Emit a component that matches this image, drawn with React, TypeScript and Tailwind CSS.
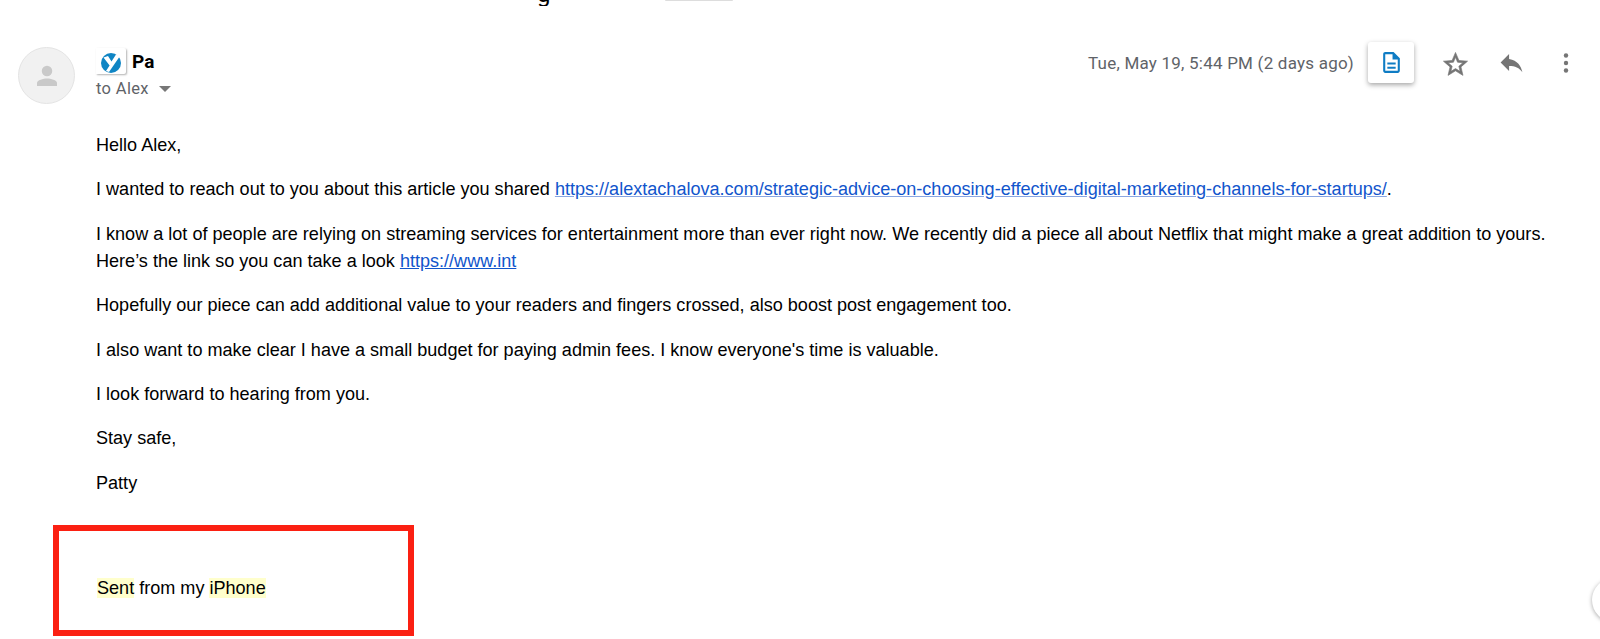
const ICON_GRAY = "#757575";

function Logo() {
  return (
    <div className="flex h-[26px] w-[30px] items-center justify-center rounded-r-[2px] bg-white pt-[3px] shadow-[1px_1px_2px_rgba(0,0,0,0.3)]">
      <svg viewBox="0 0 20 20" className="h-[20px] w-[20px]">
        <circle cx="10" cy="10" r="10" fill="#0f85c4" />
        <path d="M2.5 4.5 7 3 10.5 8.5 15 1.5 19 3 8 19 5 18 8.6 12.6Z" fill="#fff" />
      </svg>
    </div>
  );
}

function Header() {
  return (
    <div className="flex items-start pl-[18px] pr-[22px]">
      <div className="flex h-[57px] w-[57px] shrink-0 items-center justify-center rounded-full border border-[#e4e4e4] bg-[#f1f1f1]">
        <svg viewBox="0 0 24 24" className="h-[30px] w-[30px]" fill="#c9c9c9">
          <circle cx="12" cy="8" r="4.2" />
          <path d="M12 14c-3 0-8 1.3-8 3.6V20h16v-2.4C20 15.3 15 14 12 14z" />
        </svg>
      </div>
      <div className="ml-[21px] flex flex-col">
        <div className="mt-[1px] flex h-[26px] items-center">
          <Logo />
          <span className="ml-[6px] mt-[3px] text-[19px] font-bold text-black font-['Roboto',sans-serif]">Pa</span>
        </div>
        <div className="mt-[5px] flex items-center text-[16.5px] leading-[20px] tracking-[0.35px] text-[#5f6368] font-['Roboto',sans-serif]">
          to Alex
          <span className="ml-[10px] h-0 w-0 border-x-[6px] border-t-[6px] border-x-transparent border-t-[#777777]" />
        </div>
      </div>
      <div className="ml-auto -mt-[5px] flex h-[41px] items-center">
        <span className="mt-[3px] text-[17px] tracking-[0.22px] text-[#5f6368] font-['Roboto',sans-serif]">
          Tue, May 19, 5:44 PM (2 days ago)
        </span>
        <div className="ml-[14px] flex h-[41px] w-[46px] items-center justify-center rounded-[3px] bg-white shadow-[0_2px_5px_rgba(0,0,0,0.35)]">
          <svg viewBox="0 0 24 24" className="h-[25px] w-[25px]" fill="#0f7cc4">
            <path d="M8 16h8v2H8zm0-4h8v2H8zm6-10H6c-1.1 0-2 .9-2 2v16c0 1.1.89 2 1.99 2H18c1.1 0 2-.9 2-2V8l-6-6zm4 18H6V4h7v5h5v11z" />
          </svg>
        </div>
        <svg viewBox="0 0 24 24" className="ml-[27px] mt-[3px] h-[29px] w-[29px]" fill={ICON_GRAY} stroke={ICON_GRAY} strokeWidth="0.5">
          <path d="M22 9.24l-7.19-.62L12 2 9.19 8.63 2 9.24l5.46 4.73L5.82 21 12 17.27 18.18 21l-1.63-7.03L22 9.24zM12 15.4l-3.76 2.27 1-4.28-3.32-2.88 4.38-.38L12 6.1l1.71 4.04 4.38.38-3.32 2.88 1 4.28L12 15.4z" />
        </svg>
        <svg viewBox="0 0 24 24" className="ml-[27px] h-[29px] w-[29px]" fill={ICON_GRAY}>
          <path d="M10 9V5l-7 7 7 7v-4.1c5 0 8.5 1.6 11 5.1-1-5-4-10-11-11z" />
        </svg>
        <svg viewBox="0 0 24 24" className="ml-[28px] h-[24px] w-[24px]" fill={ICON_GRAY}>
          <circle cx="12" cy="4.5" r="2.2" />
          <circle cx="12" cy="12" r="2.2" />
          <circle cx="12" cy="19.5" r="2.2" />
        </svg>
      </div>
    </div>
  );
}

function Body() {
  return (
    <div className="ml-[96px] mt-[28px] flex flex-col gap-[17.4px] text-[18.07px] leading-[27px] text-black font-['Liberation_Sans',sans-serif]">
      <p>Hello Alex,</p>
      <p>
        I wanted to reach out to you about this article you shared{" "}
        <a className="text-[#1155cc] underline decoration-[#8aa6e2]">
          https://alextachalova.com/strategic-advice-on-choosing-effective-digital-marketing-channels-for-startups/
        </a>
        .
      </p>
      <p>
        I know a lot of people are relying on streaming services for entertainment more than ever right now. We recently did a piece all about Netflix that might make a great addition to yours.
        <br />
        Here’s the link so you can take a look <a className="text-[#1155cc] underline">https://www.int</a>
      </p>
      <p>Hopefully our piece can add additional value to your readers and fingers crossed, also boost post engagement too.</p>
      <p>I also want to make clear I have a small budget for paying admin fees. I know everyone's time is valuable.</p>
      <p>I look forward to hearing from you.</p>
      <p>Stay safe,</p>
      <p>Patty</p>
      <p className="ml-[1px] mt-[61px]">
        <span className="bg-[#ffffcc]">Sent</span> from my <span className="bg-[#ffffcc]">iPhone</span>
      </p>
    </div>
  );
}

export default function App() {
  return (
    <div className="relative h-[639px] w-[1600px] overflow-hidden bg-white">
      {/* clipped subject line at the very top */}
      <div className="flex h-[6px] items-start overflow-hidden">
        <span className="ml-[537px] -mt-[18px] text-[24px] leading-[24px] text-black font-['Roboto',sans-serif]">g</span>
        <span className="ml-[115px] h-[1px] w-[68px] rounded-b-[2px] bg-[#dddddd]" />
      </div>
      <div className="mt-[41px]">
        <Header />
        <Body />
      </div>

      {/* red annotation box */}
      <div className="absolute left-[53px] top-[525px] h-[111px] w-[361px] border-[6px] border-[#fb2012]" />
      {/* scroll button peeking in at the corner */}
      <div className="absolute left-[1592px] top-[578px] h-[44px] w-[44px] rounded-full bg-white shadow-[0_1px_4px_rgba(0,0,0,0.35)]" />
    </div>
  );
}
